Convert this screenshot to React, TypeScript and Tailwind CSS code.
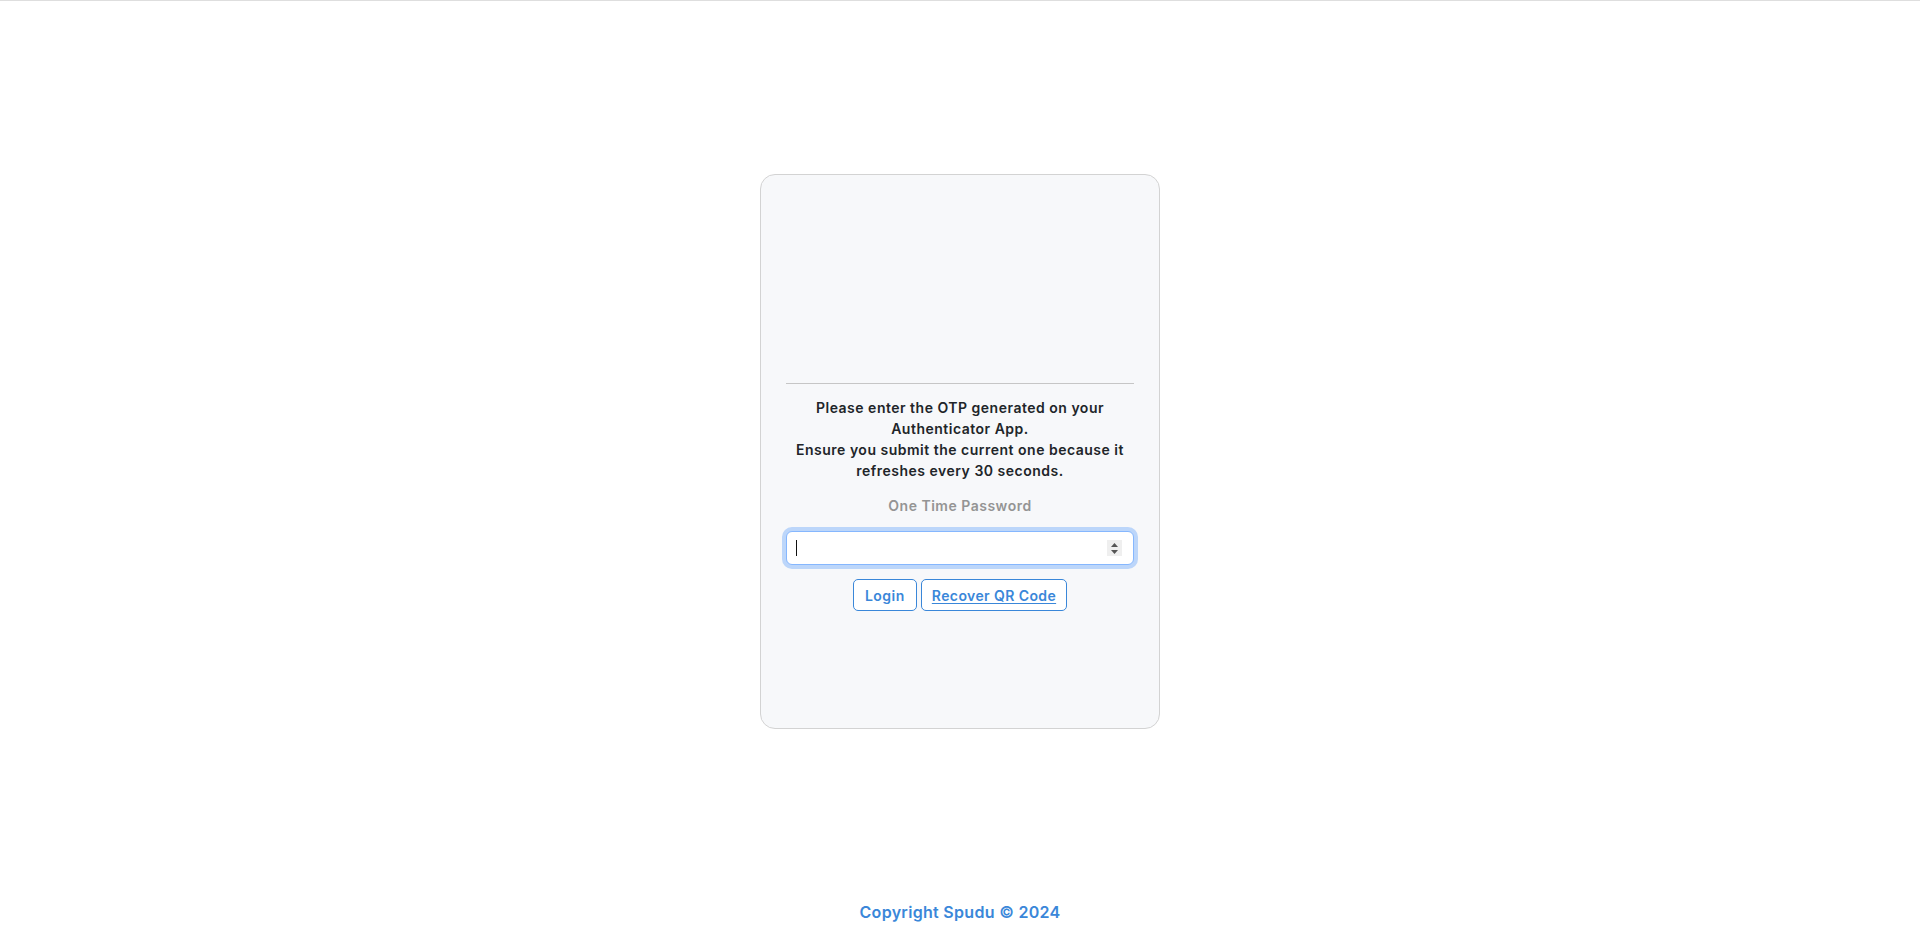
import { useState } from 'react';

function Spinner() {
    return (
        <div className="flex flex-col items-center justify-center gap-[3px] w-[15px] h-[16px] bg-[#efefef]">
            <svg width="7" height="4" viewBox="0 0 7 4"><path d="M0 4 L3.5 0 L7 4 Z" fill="#555" /></svg>
            <svg width="7" height="4" viewBox="0 0 7 4"><path d="M0 0 L3.5 4 L7 0 Z" fill="#555" /></svg>
        </div>
    );
}

export default function App() {
    const [otp, setOtp] = useState('');

    return (
        <div className="min-h-screen bg-white border-t border-[#dedede] flex flex-col items-center font-['Inter',sans-serif]">
            <div className="mt-[173px] w-[400px] h-[555px] bg-[#f7f8fa] border border-[#d3d3d3] rounded-[15px] px-[25px] pt-[208px]">
                <hr className="border-t border-[#c6c6c6]" />

                <p className="mt-[13px] text-center text-[14px] leading-[21px] tracking-[0.5px] font-semibold text-[#212529]">
                    Please enter the OTP generated on your
                    <br />
                    Authenticator App.
                    <br />
                    Ensure you submit the current one because it
                    <br />
                    refreshes every 30 seconds.
                </p>

                <p className="mt-[14px] text-center text-[14px] leading-[21px] tracking-[0.5px] font-semibold text-[#949494]">One Time Password</p>

                <div className="mt-[15px] h-[34px] flex items-center pl-[9px] pr-[11px] bg-white border border-[#86b7fe] rounded-[6px] shadow-[0_0_0_4px_rgba(13,110,253,0.25)]">
                    {/* fake caret, the input is focused in the screenshot */}
                    <span className="w-px h-[16px] bg-[#111]" />
                    <input
                        name="otp"
                        value={otp}
                        onChange={(e) => setOtp(e.target.value)}
                        className="flex-1 min-w-0 bg-transparent outline-none text-[14px]"
                    />
                    <Spinner />
                </div>

                <div className="mt-[14px] flex justify-center gap-[4px]">
                    <button className="h-[32px] px-[11px] bg-white border border-[#3a87d9] rounded-[5px] text-[14px] tracking-[0.5px] font-semibold text-[#3a87d9]">
                        Login
                    </button>
                    <button className="h-[32px] px-[10px] bg-white border border-[#3a87d9] rounded-[5px] text-[14px] tracking-[0.4px] font-semibold text-[#3a87d9] underline underline-offset-2">
                        Recover QR Code
                    </button>
                </div>
            </div>

            <footer className="mt-[171px] text-[16px] leading-[24px] tracking-[0.3px] font-semibold text-[#3a87d9]">
                Copyright Spudu © 2024
            </footer>
        </div>
    );
}
